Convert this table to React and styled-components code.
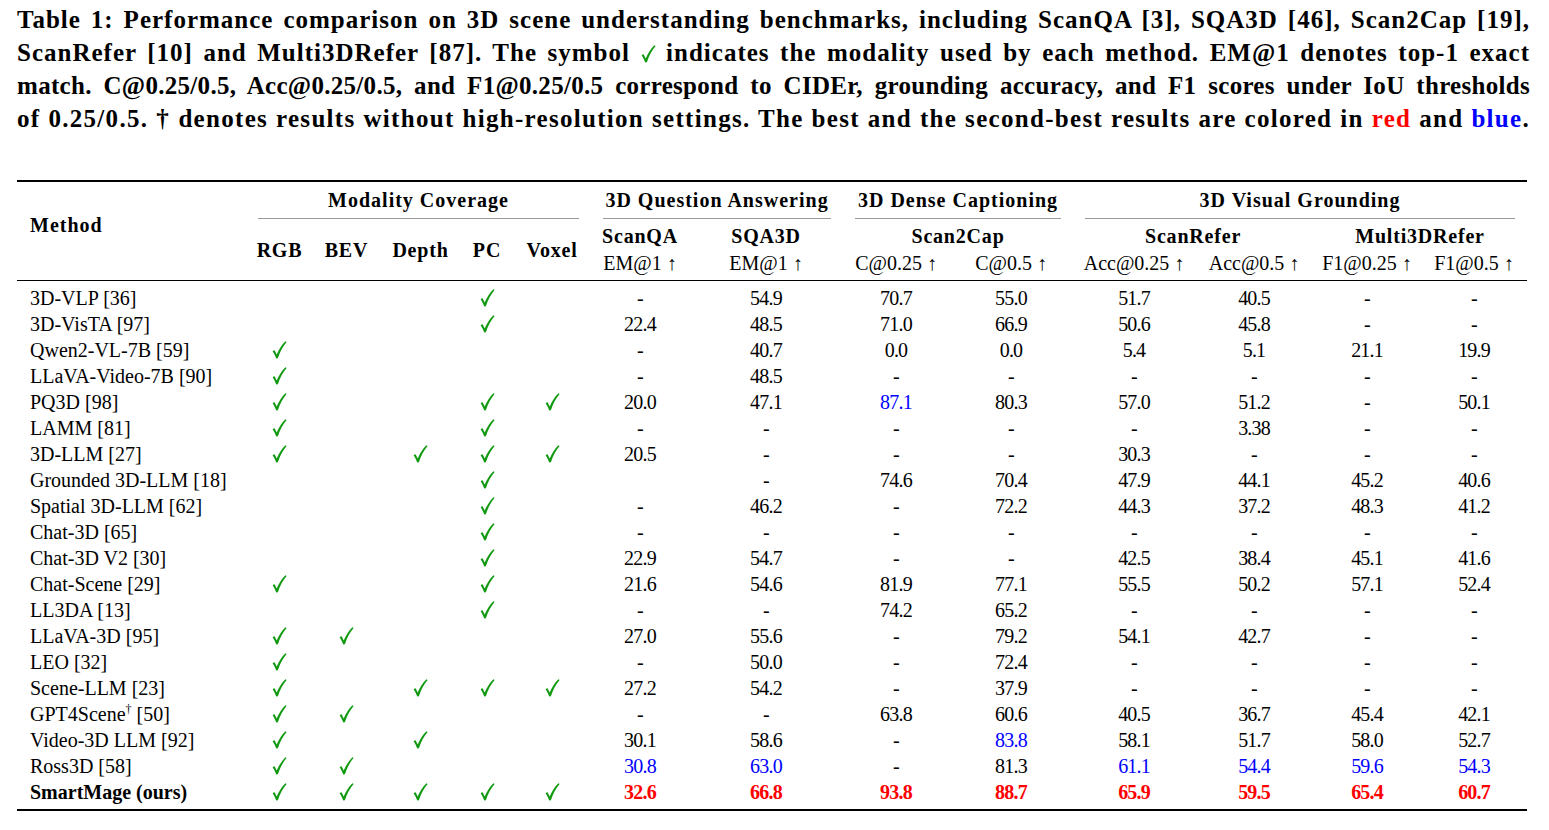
import React from 'react';
import styled, { createGlobalStyle } from 'styled-components';

const GlobalStyle = createGlobalStyle`
  html, body {
    margin: 0;
    padding: 0;
    background: #fff;
  }
  body {
    font-family: "Liberation Serif", "DejaVu Serif", serif;
    color: #000;
  }
`;

const Page = styled.div`
  padding: 3px 0 0 17px;
  width: 1513px;
`;

const Caption = styled.div`
  font-weight: 700;
  font-size: 25px;
  line-height: 33px;
`;

// each caption line is justified on its own so the breaks match the paper
const CaptionLine = styled.div`
  text-align: justify;
  text-align-last: justify;
  letter-spacing: ${(p) => p.$track || 0.3}px;
`;

const Red = styled.span`
  color: #ff0000;
`;

const Blue = styled.span`
  color: #0000ff;
`;

const TickSvg = styled.svg`
  display: inline-block;
  width: 15px;
  height: 18px;
  vertical-align: -2px;
  fill: #119a11;
`;

// brush-style check mark, as in the dingbat font of the paper
const Tick = () => (
  <TickSvg viewBox="0 0 15 18" aria-label="✓">
    <path d="M0.6 10.2 C1.4 9.6 2.1 9.3 2.6 9.2 L4.7 13.4 C6.9 8.6 9.8 3.8 13.4 0.3 L14.6 1.1 C10.9 5.3 8.0 10.9 5.9 17.2 L4.3 17.6 C3.3 14.9 2.1 12.3 0.6 10.2 Z" />
  </TickSvg>
);

const Table = styled.table`
  margin-top: 45px;
  border-collapse: collapse;
  table-layout: fixed;
  width: 1510px;
  border-top: 2px solid #000;
  border-bottom: 2px solid #000;
  font-size: 20px;

  thead {
    border-bottom: 1px solid #000;
  }
`;

const MethodTh = styled.th`
  text-align: left;
  padding: 0 0 12px 13px;
  font-weight: 700;
  letter-spacing: 1px;
  line-height: 24px;
  vertical-align: middle;
`;

const GroupTh = styled.th`
  height: 37px;
  padding: 0;
  vertical-align: bottom;
  font-weight: 700;
  letter-spacing: 1px;
`;

const GroupLabel = styled.div`
  margin: 0 12px;
  line-height: 24px;
  padding-bottom: 6px;
  border-bottom: 1px solid #9a9a9a;
  white-space: nowrap;
`;

const ModalTh = styled.th`
  padding: 0;
  font-weight: 700;
  letter-spacing: 0.8px;
  line-height: 24px;
  vertical-align: middle;
  text-align: center;
`;

const SubTh = styled.th`
  padding: 5px 0 0;
  font-weight: 700;
  letter-spacing: 0.8px;
  line-height: 24px;
  text-align: center;
  white-space: nowrap;
`;

const MetricTh = styled.th`
  padding: 3px 0 5px;
  font-weight: 400;
  line-height: 24px;
  text-align: center;
  white-space: nowrap;
`;

const BodyRow = styled.tr`
  &:first-child td {
    padding-top: 4px;
  }
  &:last-child td {
    padding-bottom: 4px;
  }
`;

const Td = styled.td`
  padding: 0;
  line-height: 26px;
  text-align: center;
  white-space: nowrap;
  font-weight: ${(p) => (p.$bold ? 700 : 400)};
  color: ${(p) => (p.$tone === 'red' ? '#ff0000' : p.$tone === 'blue' ? '#0000ff' : '#000')};
`;

const ValueTd = styled(Td)`
  letter-spacing: -0.8px;
`;

const MethodTd = styled(Td)`
  text-align: left;
  padding-left: 13px;
`;

const Dagger = styled.sup`
  font-size: 12px;
  line-height: 0;
  vertical-align: 8px;
`;

const colWidths = [229, 67, 67, 81, 52, 78, 98, 154, 106, 124, 122, 118, 108, 106];

const b = (v) => ({ v, tone: 'blue' });

const rows = [
  { name: '3D-VLP [36]', checks: [0, 0, 0, 1, 0], vals: ['-', '54.9', '70.7', '55.0', '51.7', '40.5', '-', '-'] },
  { name: '3D-VisTA [97]', checks: [0, 0, 0, 1, 0], vals: ['22.4', '48.5', '71.0', '66.9', '50.6', '45.8', '-', '-'] },
  { name: 'Qwen2-VL-7B [59]', checks: [1, 0, 0, 0, 0], vals: ['-', '40.7', '0.0', '0.0', '5.4', '5.1', '21.1', '19.9'] },
  { name: 'LLaVA-Video-7B [90]', checks: [1, 0, 0, 0, 0], vals: ['-', '48.5', '-', '-', '-', '-', '-', '-'] },
  { name: 'PQ3D [98]', checks: [1, 0, 0, 1, 1], vals: ['20.0', '47.1', b('87.1'), '80.3', '57.0', '51.2', '-', '50.1'] },
  { name: 'LAMM [81]', checks: [1, 0, 0, 1, 0], vals: ['-', '-', '-', '-', '-', '3.38', '-', '-'] },
  { name: '3D-LLM [27]', checks: [1, 0, 1, 1, 1], vals: ['20.5', '-', '-', '-', '30.3', '-', '-', '-'] },
  { name: 'Grounded 3D-LLM [18]', checks: [0, 0, 0, 1, 0], vals: ['', '-', '74.6', '70.4', '47.9', '44.1', '45.2', '40.6'] },
  { name: 'Spatial 3D-LLM [62]', checks: [0, 0, 0, 1, 0], vals: ['-', '46.2', '-', '72.2', '44.3', '37.2', '48.3', '41.2'] },
  { name: 'Chat-3D [65]', checks: [0, 0, 0, 1, 0], vals: ['-', '-', '-', '-', '-', '-', '-', '-'] },
  { name: 'Chat-3D V2 [30]', checks: [0, 0, 0, 1, 0], vals: ['22.9', '54.7', '-', '-', '42.5', '38.4', '45.1', '41.6'] },
  { name: 'Chat-Scene [29]', checks: [1, 0, 0, 1, 0], vals: ['21.6', '54.6', '81.9', '77.1', '55.5', '50.2', '57.1', '52.4'] },
  { name: 'LL3DA [13]', checks: [0, 0, 0, 1, 0], vals: ['-', '-', '74.2', '65.2', '-', '-', '-', '-'] },
  { name: 'LLaVA-3D [95]', checks: [1, 1, 0, 0, 0], vals: ['27.0', '55.6', '-', '79.2', '54.1', '42.7', '-', '-'] },
  { name: 'LEO [32]', checks: [1, 0, 0, 0, 0], vals: ['-', '50.0', '-', '72.4', '-', '-', '-', '-'] },
  { name: 'Scene-LLM [23]', checks: [1, 0, 1, 1, 1], vals: ['27.2', '54.2', '-', '37.9', '-', '-', '-', '-'] },
  { name: 'GPT4Scene', dagger: true, ref: ' [50]', checks: [1, 1, 0, 0, 0], vals: ['-', '-', '63.8', '60.6', '40.5', '36.7', '45.4', '42.1'] },
  { name: 'Video-3D LLM [92]', checks: [1, 0, 1, 0, 0], vals: ['30.1', '58.6', '-', b('83.8'), '58.1', '51.7', '58.0', '52.7'] },
  { name: 'Ross3D [58]', checks: [1, 1, 0, 0, 0], vals: [b('30.8'), b('63.0'), '-', '81.3', b('61.1'), b('54.4'), b('59.6'), b('54.3')] },
  {
    name: 'SmartMage (ours)',
    ours: true,
    checks: [1, 1, 1, 1, 1],
    vals: ['32.6', '66.8', '93.8', '88.7', '65.9', '59.5', '65.4', '60.7'].map((v) => ({ v, tone: 'red' })),
  },
];

const modalities = ['RGB', 'BEV', 'Depth', 'PC', 'Voxel'];
const metrics = ['EM@1 ↑', 'EM@1 ↑', 'C@0.25 ↑', 'C@0.5 ↑', 'Acc@0.25 ↑', 'Acc@0.5 ↑', 'F1@0.25 ↑', 'F1@0.5 ↑'];

const App = () => {
  return (
    <Page>
      <GlobalStyle />
      <Caption>
        <CaptionLine $track={1}>
          Table 1: Performance comparison on 3D scene understanding benchmarks, including ScanQA [3], SQA3D [46], Scan2Cap [19],
        </CaptionLine>
        <CaptionLine $track={1}>
          ScanRefer [10] and Multi3DRefer [87]. The symbol <Tick /> indicates the modality used by each method. EM@1 denotes top-1 exact
        </CaptionLine>
        <CaptionLine $track={0.3}>
          match. C@0.25/0.5, Acc@0.25/0.5, and F1@0.25/0.5 correspond to CIDEr, grounding accuracy, and F1 scores under IoU thresholds
        </CaptionLine>
        <CaptionLine $track={1.3}>
          of 0.25/0.5. † denotes results without high-resolution settings. The best and the second-best results are colored in <Red>red</Red> and <Blue>blue</Blue>.
        </CaptionLine>
      </Caption>

      <Table>
        <colgroup>
          {colWidths.map((w, i) => (
            <col key={i} style={{ width: w }} />
          ))}
        </colgroup>
        <thead>
          <tr>
            <MethodTh rowSpan={3}>Method</MethodTh>
            <GroupTh colSpan={5}>
              <GroupLabel>Modality Coverage</GroupLabel>
            </GroupTh>
            <GroupTh colSpan={2}>
              <GroupLabel>3D Question Answering</GroupLabel>
            </GroupTh>
            <GroupTh colSpan={2}>
              <GroupLabel>3D Dense Captioning</GroupLabel>
            </GroupTh>
            <GroupTh colSpan={4}>
              <GroupLabel>3D Visual Grounding</GroupLabel>
            </GroupTh>
          </tr>
          <tr>
            {modalities.map((m) => (
              <ModalTh key={m} rowSpan={2}>{m}</ModalTh>
            ))}
            <SubTh>ScanQA</SubTh>
            <SubTh>SQA3D</SubTh>
            <SubTh colSpan={2}>Scan2Cap</SubTh>
            <SubTh colSpan={2}>ScanRefer</SubTh>
            <SubTh colSpan={2}>Multi3DRefer</SubTh>
          </tr>
          <tr>
            {metrics.map((m, i) => (
              <MetricTh key={i}>{m}</MetricTh>
            ))}
          </tr>
        </thead>
        <tbody>
          {rows.map((row) => (
            <BodyRow key={row.name}>
              <MethodTd $bold={row.ours}>
                {row.name}
                {row.dagger && <Dagger>†</Dagger>}
                {row.ref}
              </MethodTd>
              {row.checks.map((c, i) => (
                <Td key={'c' + i}>{c ? <Tick /> : null}</Td>
              ))}
              {row.vals.map((val, i) => {
                const cell = typeof val === 'string' ? { v: val } : val;
                return (
                  <ValueTd key={'v' + i} $tone={cell.tone} $bold={row.ours}>
                    {cell.v}
                  </ValueTd>
                );
              })}
            </BodyRow>
          ))}
        </tbody>
      </Table>
    </Page>
  );
};

export default App;
